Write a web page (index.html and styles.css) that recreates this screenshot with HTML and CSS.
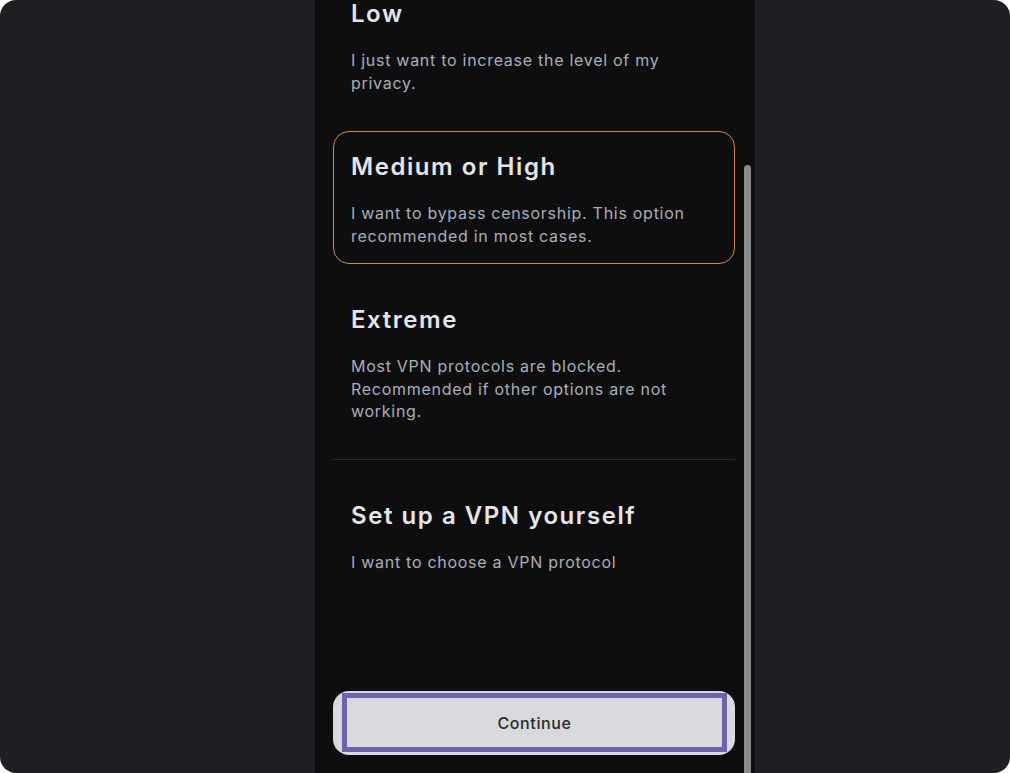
FILE: index.html
```html
<!DOCTYPE html>
<html>
<head>
<meta charset="utf-8">
<link rel="stylesheet" href="styles.css">
</head>
<body>
<div class="frame">
  <div class="panel">
    <div class="scroll">
      <div class="list">
        <div class="option">
          <div class="title">Low</div>
          <div class="desc">I just want to increase the level of my privacy.</div>
        </div>
        <div class="option selected">
          <div class="title">Medium or High</div>
          <div class="desc">I want to bypass censorship. This option recommended in most cases.</div>
        </div>
        <div class="option">
          <div class="title">Extreme</div>
          <div class="desc">Most VPN protocols are blocked. Recommended if other options are not working.</div>
        </div>
        <div class="divider"></div>
        <div class="option">
          <div class="title">Set up a VPN yourself</div>
          <div class="desc">I want to choose a VPN protocol</div>
        </div>
      </div>
    </div>
    <div class="footer">
      <button class="continue"><span class="focus">Continue</span></button>
    </div>
    <div class="scrollbar"><div class="thumb"></div></div>
  </div>
</div>
</body>
</html>
```
FILE: styles.css
```css
html, body {
  margin: 0;
  padding: 0;
  background: #ffffff;
}
body {
  width: 1010px;
  height: 773px;
  overflow: hidden;
  font-family: Inter, "Noto Sans", sans-serif;
}
.frame {
  width: 1010px;
  height: 773px;
  background: #1f2024;
  border-radius: 16px;
  display: flex;
  justify-content: flex-start;
  padding-left: 315px;
  box-sizing: border-box;
  overflow: hidden;
}
.panel {
  position: relative;
  width: 440px;
  height: 773px;
  background: #0e0e10;
  display: flex;
  flex-direction: column;
}
.scroll {
  flex: 1;
  overflow: hidden;
  padding: 0 20px 0 18px;
}
.list {
  margin-top: -22px;
  display: flex;
  flex-direction: column;
  gap: 20px;
}
.option {
  border: 1px solid transparent;
  border-radius: 16px;
  padding: 20px 17px 16px 17px;
}
.option.selected {
  border-color: #c98a4b;
}
.title {
  font-size: 24px;
  line-height: 30px;
  font-weight: 600;
  color: #e4e5e8;
  letter-spacing: 1.55px;
}
.desc {
  margin-top: 20px;
  font-size: 16px;
  line-height: 22.5px;
  color: #aaaeb6;
  letter-spacing: 0.72px;
}
.divider {
  height: 1px;
  background: #2b2b2f;
  margin-top: -1px;
}
.footer {
  padding: 0 20px 18px 18px;
}
.continue {
  display: flex;
  width: 402px;
  height: 64px;
  padding: 2px 8px 3px 9px;
  border: none;
  border-radius: 16px;
  background: #d8d9dc;
  font-family: inherit;
  cursor: pointer;
}
.focus {
  flex: 1;
  display: flex;
  align-items: center;
  justify-content: center;
  border: 5px solid #7161a8;
  font-size: 16px;
  font-weight: 500;
  color: #2a2a2f;
  letter-spacing: 0.6px;
}
.scrollbar {
  position: absolute;
  top: 0;
  right: 0;
  width: 11px;
  height: 773px;
  background: #0e0e10;
}
.thumb {
  position: absolute;
  left: 0;
  top: 165px;
  width: 7px;
  height: 620px;
  border-radius: 4px;
  background: #8c8c8e;
}
```
